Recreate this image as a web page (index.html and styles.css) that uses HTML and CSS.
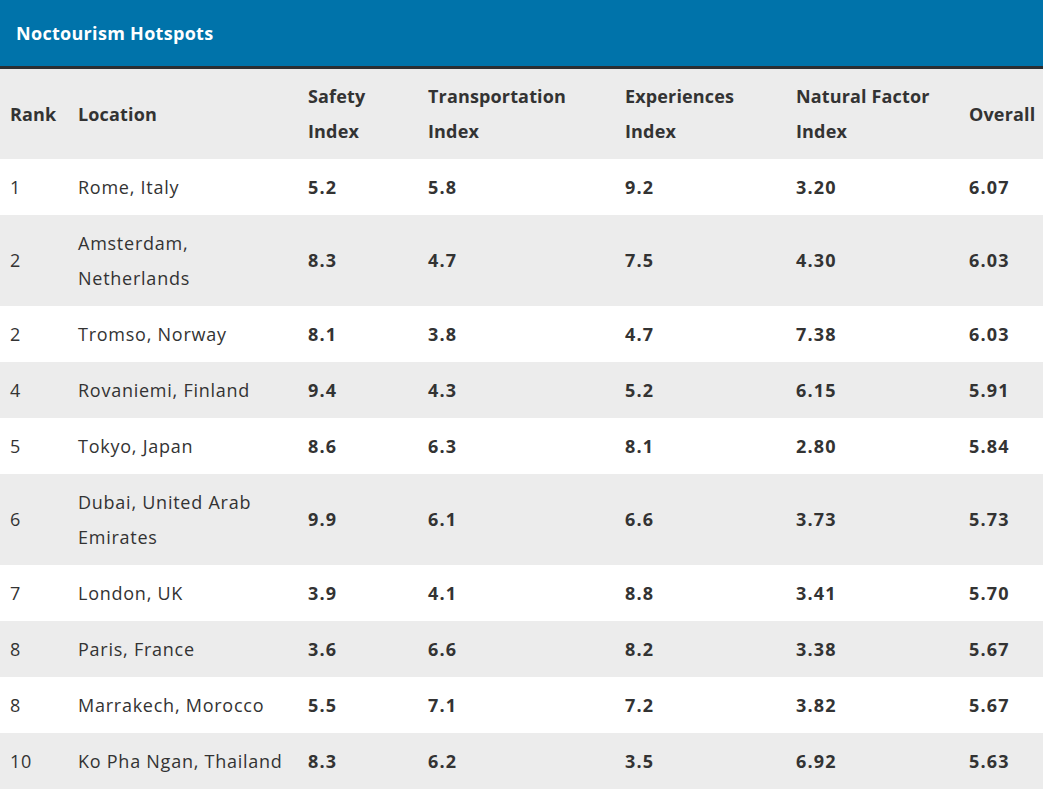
FILE: index.html
```html
<!DOCTYPE html>
<html lang="en">
<head>
<meta charset="utf-8">
<title>Noctourism Hotspots</title>
<link rel="stylesheet" href="styles.css">
</head>
<body>
<div class="widget">
  <div class="title-bar"><h2 class="title">Noctourism Hotspots</h2></div>
  <div class="table-wrap">
    <table class="data">
      <colgroup>
        <col class="c-rank"><col class="c-loc"><col class="c-safe"><col class="c-trans"><col class="c-exp"><col class="c-nat"><col class="c-over">
      </colgroup>
      <thead>
        <tr><th>Rank</th><th>Location</th><th>Safety Index</th><th>Transportation Index</th><th>Experiences Index</th><th>Natural Factor Index</th><th>Overall</th></tr>
      </thead>
      <tbody>
        <tr><td>1</td><td>Rome, Italy</td><td class="num">5.2</td><td class="num">5.8</td><td class="num">9.2</td><td class="num">3.20</td><td class="num">6.07</td></tr>
        <tr><td>2</td><td>Amsterdam, Netherlands</td><td class="num">8.3</td><td class="num">4.7</td><td class="num">7.5</td><td class="num">4.30</td><td class="num">6.03</td></tr>
        <tr><td>2</td><td>Tromso, Norway</td><td class="num">8.1</td><td class="num">3.8</td><td class="num">4.7</td><td class="num">7.38</td><td class="num">6.03</td></tr>
        <tr><td>4</td><td>Rovaniemi, Finland</td><td class="num">9.4</td><td class="num">4.3</td><td class="num">5.2</td><td class="num">6.15</td><td class="num">5.91</td></tr>
        <tr><td>5</td><td>Tokyo, Japan</td><td class="num">8.6</td><td class="num">6.3</td><td class="num">8.1</td><td class="num">2.80</td><td class="num">5.84</td></tr>
        <tr><td>6</td><td>Dubai, United Arab Emirates</td><td class="num">9.9</td><td class="num">6.1</td><td class="num">6.6</td><td class="num">3.73</td><td class="num">5.73</td></tr>
        <tr><td>7</td><td>London, UK</td><td class="num">3.9</td><td class="num">4.1</td><td class="num">8.8</td><td class="num">3.41</td><td class="num">5.70</td></tr>
        <tr><td>8</td><td>Paris, France</td><td class="num">3.6</td><td class="num">6.6</td><td class="num">8.2</td><td class="num">3.38</td><td class="num">5.67</td></tr>
        <tr><td>8</td><td>Marrakech, Morocco</td><td class="num">5.5</td><td class="num">7.1</td><td class="num">7.2</td><td class="num">3.82</td><td class="num">5.67</td></tr>
        <tr><td>10</td><td>Ko Pha Ngan, Thailand</td><td class="num">8.3</td><td class="num">6.2</td><td class="num">3.5</td><td class="num">6.92</td><td class="num">5.63</td></tr>
      </tbody>
    </table>
  </div>
</div>
</body>
</html>
```

FILE: styles.css
```css
html, body {
  margin: 0;
  padding: 0;
  background: #ffffff;
  overflow: hidden;
}
body {
  font-family: "Open Sans", "Noto Sans", "Liberation Sans", sans-serif;
  color: #333333;
}
.widget {
  width: 1043px;
}
.title-bar {
  background: #0073aa;
  height: 66px;
  border-bottom: 3px solid #2b2f33;
  display: flex;
  align-items: center;
  padding: 0 16px;
}
.title {
  margin: 0;
  font-size: 18px;
  font-weight: 700;
  color: #ffffff;
  letter-spacing: 0.3px;
}
.table-wrap {
  overflow: hidden;
}
.data {
  border-collapse: collapse;
  table-layout: fixed;
  width: 1059px;
  font-size: 18px;
  line-height: 35px;
}
.c-rank { width: 68px; }
.c-loc { width: 230px; }
.c-safe { width: 120px; }
.c-trans { width: 197px; }
.c-exp { width: 171px; }
.c-nat { width: 173px; }
.c-over { width: 100px; }
.data th,
.data td {
  padding: 10.5px 10px;
  text-align: left;
  vertical-align: middle;
  letter-spacing: 0.75px;
}
.data th {
  font-weight: 700;
  background: #ececec;
  letter-spacing: 0.15px;
  padding-top: 10px;
  padding-bottom: 10px;
}
.data tbody tr:nth-child(even) td {
  background: #ececec;
}
.data td.num {
  font-weight: 700;
  letter-spacing: 1.2px;
}
```
